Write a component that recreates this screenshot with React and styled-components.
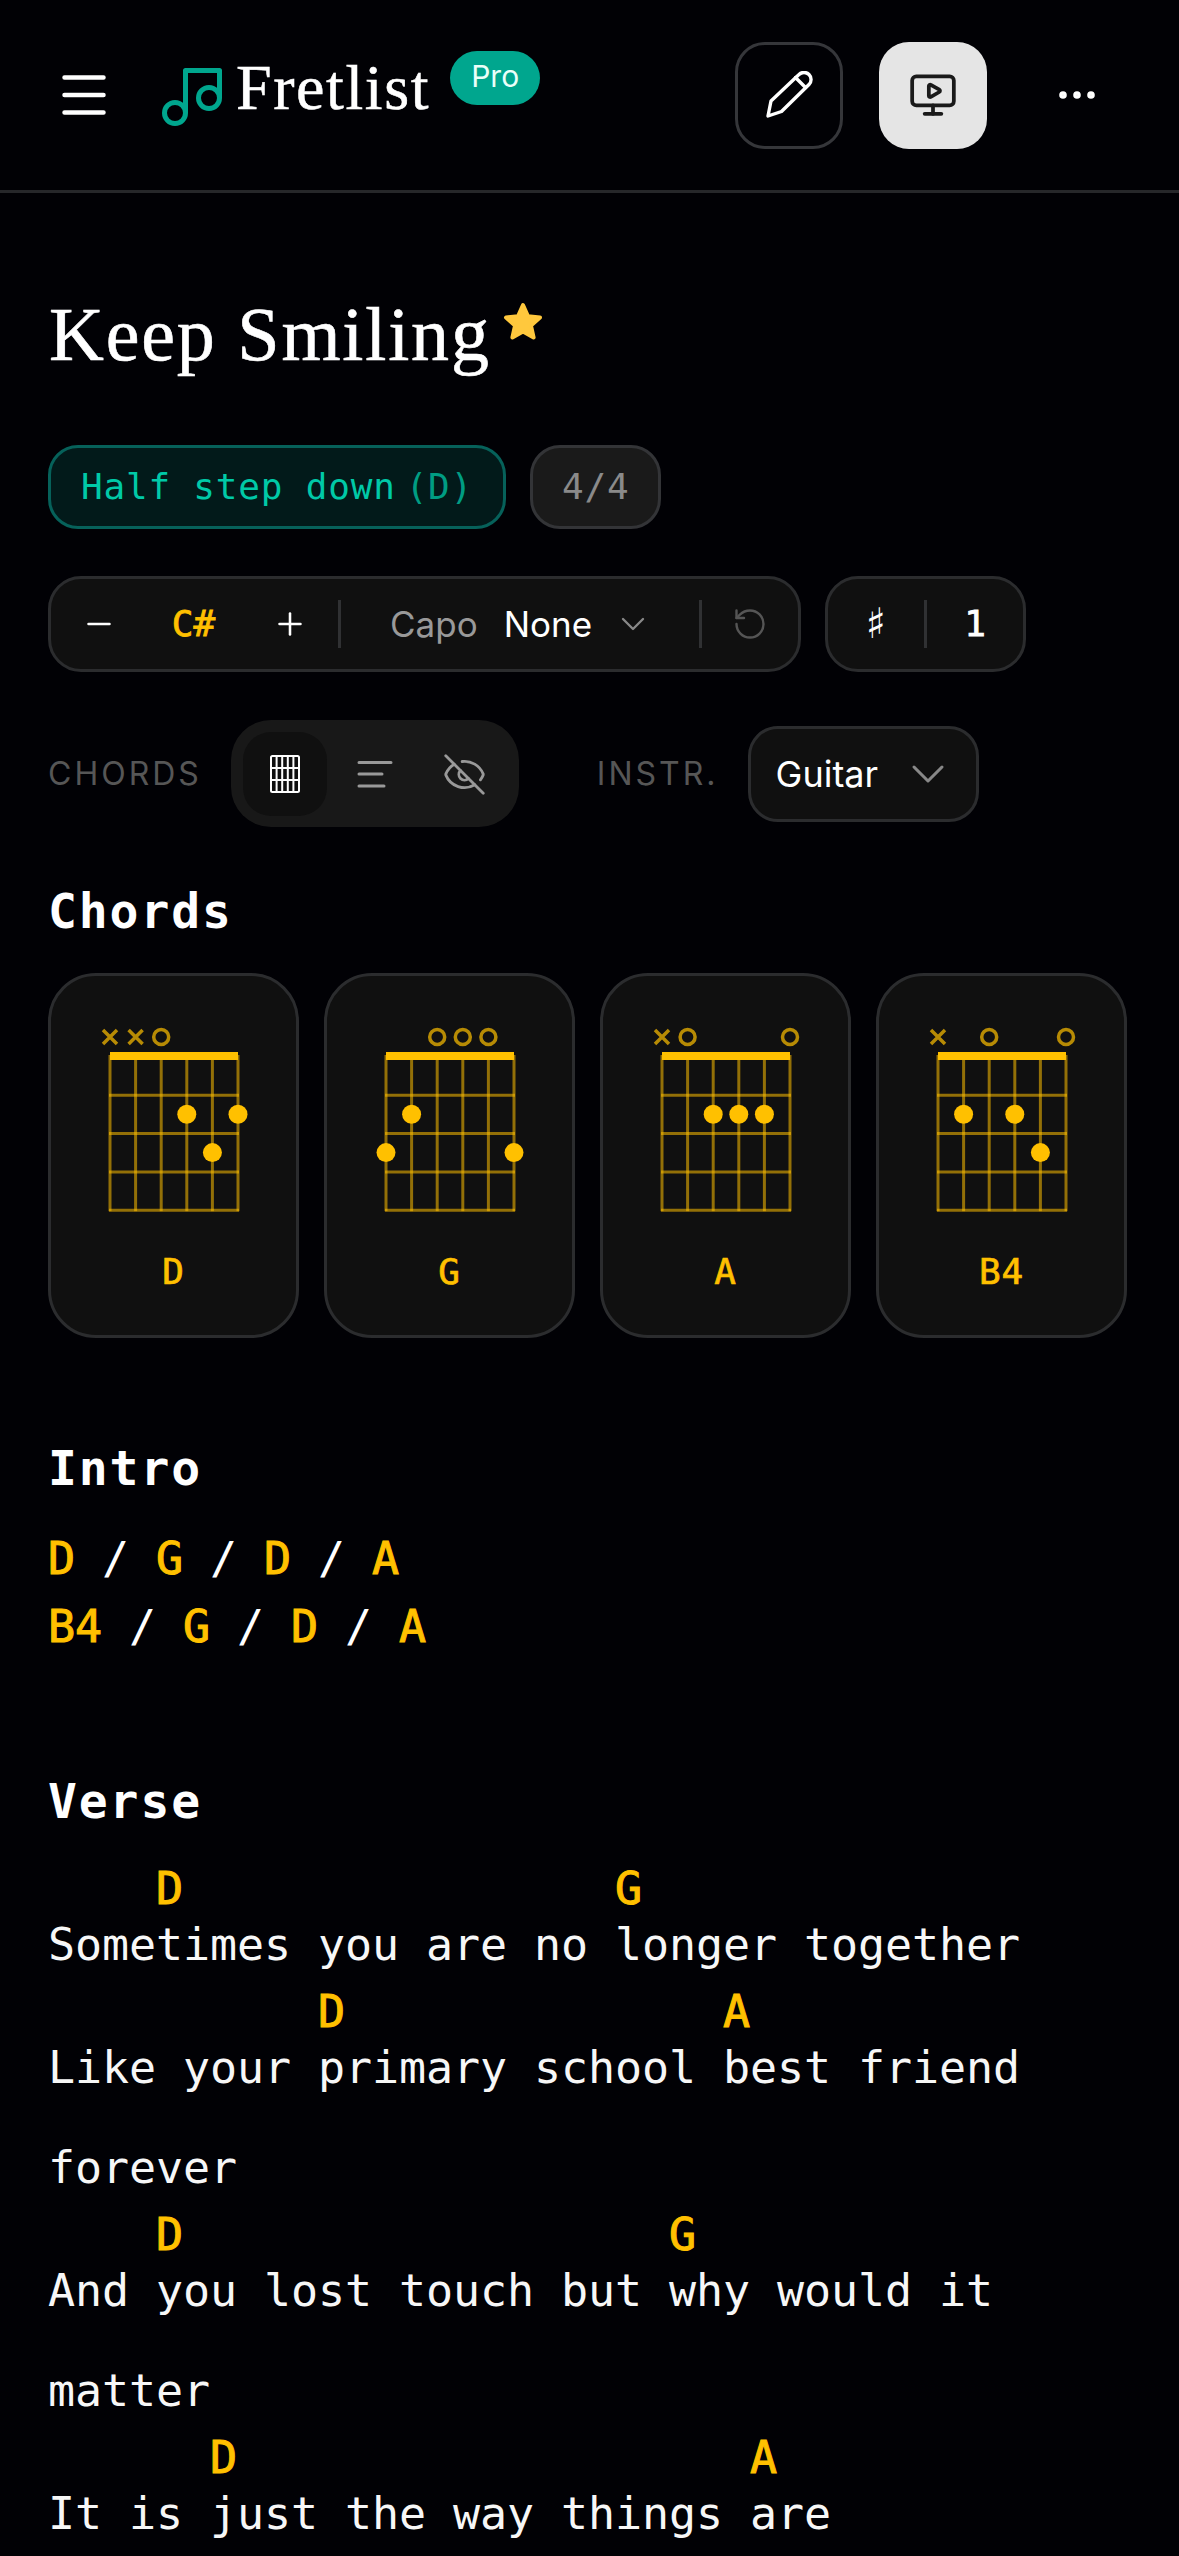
import React from 'react';
import styled, { createGlobalStyle } from 'styled-components';
import { ChevronDown, Ellipsis, EyeOff, MonitorPlay, Minus, Plus, RotateCcw } from 'lucide-react';

const mono = '"DejaVu Sans Mono", "Liberation Mono", monospace';
const serif = '"Liberation Serif", serif';
const sans = 'Inter, "Liberation Sans", sans-serif';
const amber = '#ffc000';

const GlobalStyle = createGlobalStyle`
  html, body {
    margin: 0;
    background: #010105;
    color: #fff;
  }
`;

const Page = styled.div`
  width: 1179px;
  min-height: 2556px;
  box-sizing: border-box;
  overflow: hidden;
`;

const Header = styled.header`
  height: 190px;
  display: flex;
  align-items: center;
  padding: 0 48px 0 62px;
  border-bottom: 3px solid #26272a;
`;

const Brand = styled.div`
  align-self: stretch;
  display: flex;
  align-items: flex-start;
  margin-left: 54px;
  padding-top: 51px;
`;

const Logo = styled.svg`
  width: 64px;
  height: 60px;
  margin-top: 16px;
`;

const Wordmark = styled.div`
  font: 400 64px/80px ${serif};
  letter-spacing: 1.6px;
  -webkit-text-stroke: 0.5px #fff;
  margin: -3px 0 0 12px;
`;

const ProBadge = styled.span`
  width: 90px;
  height: 54px;
  margin-left: 20px;
  border-radius: 27px;
  background: #00a68e;
  color: #eafff9;
  font: 400 30px/50px ${sans};
  text-align: center;
`;

const Actions = styled.div`
  display: flex;
  gap: 36px;
  margin-left: auto;
`;

const IconButton = styled.button`
  width: 108px;
  height: 107px;
  padding: 0;
  display: flex;
  align-items: center;
  justify-content: center;
  box-sizing: border-box;
  border-radius: 30px;
  border: ${({ $outlined }) => ($outlined ? '3px solid #35363a' : 'none')};
  background: ${({ $active }) => ($active ? '#e5e5e5' : 'transparent')};
  color: ${({ $active }) => ($active ? '#1a1a1a' : '#fff')};
`;

const Main = styled.main`
  padding: 96px 51px 0 48px;
`;

const TitleRow = styled.div`
  display: flex;
  align-items: flex-start;
  padding-left: 1px;
`;

const Title = styled.h1`
  margin: 0;
  font: 400 76px/90px ${serif};
  letter-spacing: 1.8px;
  -webkit-text-stroke: 0.6px #fff;
`;

const Star = styled.svg`
  width: 42px;
  height: 41px;
  margin: 12px 0 0 11px;
`;

const Tags = styled.div`
  display: flex;
  gap: 24px;
  margin-top: 66px;
`;

const Tag = styled.div`
  height: 84px;
  box-sizing: border-box;
  display: flex;
  align-items: center;
  gap: 10px;
  padding: 0 ${({ $teal }) => ($teal ? 30 : 29)}px;
  border-radius: 30px;
  border: 3px solid ${({ $teal }) => ($teal ? '#06615a' : '#333437')};
  background: ${({ $teal }) => ($teal ? '#021a1a' : '#1a1a1a')};
  color: ${({ $teal }) => ($teal ? '#00c9a7' : '#8a8a8a')};
  font: 400 36px/1 ${mono};
  letter-spacing: 0.8px;
  white-space: pre;
`;

const Faded = styled.span`
  opacity: 0.75;
`;

const Controls = styled.div`
  display: flex;
  gap: 24px;
  margin-top: 47px;
`;

const ControlGroup = styled.div`
  width: ${({ $width }) => $width}px;
  height: 96px;
  box-sizing: border-box;
  display: flex;
  align-items: center;
  border-radius: 33px;
  border: 3px solid #2b2c2e;
  background: #101010;
`;

const Slot = styled.div`
  width: ${({ $width }) => $width || 95}px;
  margin-left: ${({ $offset }) => $offset || 0}px;
  display: flex;
  align-items: center;
  justify-content: center;
  color: ${({ $color }) => $color || '#fff'};
  font: 400 36px/1 ${mono};
  -webkit-text-stroke: ${({ $strong }) => ($strong ? '0.8px' : '0')};
  flex-shrink: 0;
`;

const SharpGlyph = styled.span`
  font: 400 42px/1 "DejaVu Sans", sans-serif;
`;

const Divider = styled.span`
  width: 3px;
  height: 48px;
  margin-left: ${({ $offset }) => $offset || 0}px;
  flex-shrink: 0;
  background: #303133;
`;

const CapoLabel = styled.span`
  margin-left: 49px;
  color: #999;
  font: 400 35px/1 ${sans};
`;

const CapoValue = styled.span`
  margin-left: 26px;
  color: #fff;
  font: 400 35px/1 ${sans};
`;

const ViewRow = styled.div`
  display: flex;
  align-items: center;
  margin-top: 48px;
`;

const RowLabel = styled.span`
  margin-left: ${({ $offset }) => $offset || 0}px;
  color: #565656;
  font: 400 32px/1 ${sans};
  letter-spacing: 3px;
`;

const ViewSwitch = styled.div`
  width: 288px;
  height: 107px;
  box-sizing: border-box;
  margin-left: 29px;
  padding: 12px;
  display: flex;
  gap: 6px;
  border-radius: 40px;
  background: #181818;
`;

const ViewOption = styled.div`
  width: 84px;
  height: 84px;
  display: flex;
  align-items: center;
  justify-content: center;
  border-radius: 28px;
  background: ${({ $active }) => ($active ? '#101010' : 'transparent')};
  color: ${({ $active }) => ($active ? '#fff' : '#999')};
`;

const SelectBox = styled.div`
  width: 231px;
  height: 96px;
  box-sizing: border-box;
  margin-left: 29px;
  padding-left: 25px;
  display: flex;
  align-items: center;
  border-radius: 30px;
  border: 3px solid #2b2c2e;
  background: #101010;
  color: #fff;
  font: 400 36px/1 ${sans};
`;

const Heading = styled.h2`
  margin: ${({ $top }) => $top}px 0 0;
  font: 700 48px/60px ${mono};
  letter-spacing: 1.9px;
  color: #fff;
`;

const ChordGrid = styled.div`
  display: grid;
  grid-template-columns: repeat(4, 251px);
  gap: 25px;
  margin-top: 32px;
`;

const ChordCard = styled.div`
  height: 365px;
  box-sizing: border-box;
  padding-top: 49px;
  display: flex;
  flex-direction: column;
  align-items: center;
  border-radius: 48px;
  border: 3px solid #2b2c2e;
  background: #101010;
`;

const ChordName = styled.div`
  margin-top: 33px;
  color: ${amber};
  font: 400 36px/44px ${mono};
  letter-spacing: 0.9px;
  -webkit-text-stroke: 0.7px ${amber};
`;

const ProgressionLines = styled.div`
  margin-top: 27px;
`;

const ProgressionLine = styled.div`
  font: 400 45px/68px ${mono};
  letter-spacing: -0.09px;
  white-space: pre;
`;

const ChordText = styled.span`
  color: ${amber};
  -webkit-text-stroke: 1px ${amber};
`;

const Sheet = styled.div`
  margin-top: 38px;
`;

const ChordLine = styled.div`
  color: ${amber};
  font: 400 45px/40px ${mono};
  letter-spacing: -0.09px;
  -webkit-text-stroke: 1px ${amber};
  white-space: pre;
  margin-bottom: -14px;
`;

const LyricLine = styled.div`
  color: #f7f7f7;
  font: 400 45px/100px ${mono};
  letter-spacing: -0.09px;
  white-space: pre-wrap;
  margin-bottom: -3px;
`;

const strings = [0, 1, 2, 3, 4, 5];
const frets = [0, 1, 2, 3, 4];

// open / muted markers, then [string, fret] for each dot
const chords = [
  { name: 'D', marks: ['x', 'x', 'o'], dots: [[3, 2], [5, 2], [4, 3]] },
  { name: 'G', marks: [null, null, 'o', 'o', 'o'], dots: [[1, 2], [0, 3], [5, 3]] },
  { name: 'A', marks: ['x', 'o', null, null, null, 'o'], dots: [[2, 2], [3, 2], [4, 2]] },
  { name: 'B4', marks: ['x', null, 'o', null, null, 'o'], dots: [[1, 2], [3, 2], [4, 3]] },
];

const ChordDiagram = ({ marks, dots }) => {
  const sx = (s) => 26 + s * 25.6;
  const fy = (f) => 32 + f * 38.3;
  return (
    <svg width="180" height="192" viewBox="0 0 180 192" fill="none">
      <g stroke={amber} strokeOpacity="0.55" strokeWidth="3">
        {strings.map((s) => (
          <line key={s} x1={sx(s)} x2={sx(s)} y1="30" y2={fy(4) + 1} />
        ))}
        {frets.slice(1).map((f) => (
          <line key={f} x1={sx(0) - 1} x2={sx(5) + 1} y1={fy(f)} y2={fy(f)} />
        ))}
      </g>
      <rect x={sx(0)} y="27" width={25.6 * 5} height="8" fill={amber} />
      <g stroke={amber} strokeOpacity="0.7" strokeWidth="3.5">
        {marks.map((m, i) => {
          if (m === 'o') return <circle key={i} cx={sx(i)} cy="12" r="7.5" />;
          if (m === 'x') {
            return (
              <path
                key={i}
                d={`M${sx(i) - 7} 5 L${sx(i) + 7} 19 M${sx(i) + 7} 5 L${sx(i) - 7} 19`}
              />
            );
          }
          return null;
        })}
      </g>
      {dots.map(([s, f]) => (
        <circle key={`${s}-${f}`} cx={sx(s)} cy={fy(f - 1) + 19} r="9.5" fill={amber} />
      ))}
    </svg>
  );
};

const PencilIcon = () => (
  <svg width="48" height="48" viewBox="0 0 48 48" fill="none" stroke="currentColor" strokeWidth="3.4" strokeLinejoin="round" strokeLinecap="round">
    <path d="M6 30 L34 3.5 a7 7 0 0 1 10 10 L16.5 40.5 L3 45 Z" />
    <path d="M30.5 6.5 L40.5 16.5" />
  </svg>
);

const GridIcon = () => (
  <svg width="30" height="38" viewBox="0 0 30 38" fill="none" stroke="currentColor" strokeWidth="2">
    <rect x="1" y="1" width="28" height="36" rx="1.5" />
    <path d="M6.6 1V37M12.2 1V37M17.8 1V37M23.4 1V37M1 13H29M1 25H29" />
  </svg>
);

const AlignIcon = () => (
  <svg width="36" height="28" viewBox="0 0 36 28" fill="none" stroke="currentColor" strokeWidth="3" strokeLinecap="round">
    <path d="M2 2.5H34M2 14H25M2 26H27" />
  </svg>
);

const sections = [
  { chords: [[4, 'D'], [21, 'G']], lyric: 'Sometimes you are no longer together' },
  { chords: [[10, 'D'], [25, 'A']], lyric: 'Like your primary school best friend forever' },
  { chords: [[4, 'D'], [23, 'G']], lyric: 'And you lost touch but why would it matter' },
  { chords: [[6, 'D'], [26, 'A']], lyric: 'It is just the way things are' },
];

// lay chords out on the monospace columns of the lyric below
const chordRow = (items) => {
  let row = '';
  items.forEach(([col, name]) => {
    row = row.padEnd(col, ' ') + name;
  });
  return row;
};

const Progression = ({ items }) => (
  <ProgressionLine>
    {items.map((name, i) => (
      <React.Fragment key={i}>
        {i > 0 && ' / '}
        <ChordText>{name}</ChordText>
      </React.Fragment>
    ))}
  </ProgressionLine>
);

export default function App() {
  return (
    <Page>
      <GlobalStyle />
      <Header>
        <svg width="44" height="40" viewBox="0 0 44 40" fill="none" stroke="#fff" strokeWidth="4.5" strokeLinecap="round">
          <path d="M2.5 2.5H41.5M2.5 20H41.5M2.5 37.5H41.5" />
        </svg>
        <Brand>
          <Logo viewBox="0 0 64 60" fill="none" stroke="#00a68e" strokeWidth="5" strokeLinejoin="round">
            <circle cx="15" cy="46" r="10.5" />
            <circle cx="49" cy="31" r="10.5" />
            <path d="M25.5 46V3.5H59.5V31" />
          </Logo>
          <Wordmark>Fretlist</Wordmark>
          <ProBadge>Pro</ProBadge>
        </Brand>
        <Actions>
          <IconButton $outlined>
            <PencilIcon />
          </IconButton>
          <IconButton $active>
            <MonitorPlay size={50} strokeWidth={1.8} />
          </IconButton>
          <IconButton>
            <Ellipsis size={48} strokeWidth={1.8} />
          </IconButton>
        </Actions>
      </Header>
      <Main>
        <TitleRow>
          <Title>Keep Smiling</Title>
          <Star viewBox="0 0 42 41">
            <path
              d="M21 4l5 11.2 12 1.3-9 8.1 2.6 11.9L21 30.4l-10.6 6.1L13 24.6l-9-8.1 12-1.3z"
              fill="#ffc83d"
              stroke="#ffc83d"
              strokeWidth="4"
              strokeLinejoin="round"
            />
          </Star>
        </TitleRow>
        <Tags>
          <Tag $teal>
            <span>Half step down</span>
            <Faded>(D)</Faded>
          </Tag>
          <Tag>4/4</Tag>
        </Tags>
        <Controls>
          <ControlGroup $width={753}>
            <Slot>
              <Minus size={36} strokeWidth={1.7} />
            </Slot>
            <Slot $color={amber} $strong>
              C#
            </Slot>
            <Slot $width={97}>
              <Plus size={36} strokeWidth={1.7} />
            </Slot>
            <Divider />
            <CapoLabel>Capo</CapoLabel>
            <CapoValue>None</CapoValue>
            <Slot $width={40} $color="#888" $offset={21}>
              <ChevronDown size={40} strokeWidth={1.4} />
            </Slot>
            <Divider $offset={46} />
            <Slot $width={96} $color="#555">
              <RotateCcw size={36} strokeWidth={1.6} />
            </Slot>
          </ControlGroup>
          <ControlGroup $width={201}>
            <Slot $width={96}>
              <SharpGlyph>♯</SharpGlyph>
            </Slot>
            <Divider />
            <Slot $width={96} $strong>
              1
            </Slot>
          </ControlGroup>
        </Controls>
        <ViewRow>
          <RowLabel>CHORDS</RowLabel>
          <ViewSwitch>
            <ViewOption $active>
              <GridIcon />
            </ViewOption>
            <ViewOption>
              <AlignIcon />
            </ViewOption>
            <ViewOption>
              <EyeOff size={45} strokeWidth={1.5} />
            </ViewOption>
          </ViewSwitch>
          <RowLabel $offset={78}>INSTR.</RowLabel>
          <SelectBox>
            Guitar
            <Slot $width={56} $color="#888" $offset={22}>
              <ChevronDown size={56} strokeWidth={1.3} />
            </Slot>
          </SelectBox>
        </ViewRow>
        <Heading $top={54}>Chords</Heading>
        <ChordGrid>
          {chords.map((chord) => (
            <ChordCard key={chord.name}>
              <ChordDiagram marks={chord.marks} dots={chord.dots} />
              <ChordName>{chord.name}</ChordName>
            </ChordCard>
          ))}
        </ChordGrid>
        <Heading $top={100}>Intro</Heading>
        <ProgressionLines>
          <Progression items={['D', 'G', 'D', 'A']} />
          <Progression items={['B4', 'G', 'D', 'A']} />
        </ProgressionLines>
        <Heading $top={110}>Verse</Heading>
        <Sheet>
          {sections.map((line) => (
            <div key={line.lyric}>
              <ChordLine>{chordRow(line.chords)}</ChordLine>
              <LyricLine>{line.lyric}</LyricLine>
            </div>
          ))}
        </Sheet>
      </Main>
    </Page>
  );
}
